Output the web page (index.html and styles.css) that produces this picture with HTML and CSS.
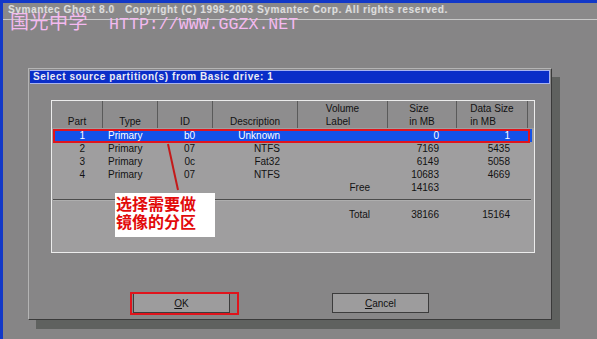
FILE: index.html
```html
<!DOCTYPE html>
<html lang="en">
<head>
    <meta charset="UTF-8">
    <title>Symantec Ghost 8.0</title>
    <link rel="stylesheet" href="styles.css">
</head>
<body>
    <div class="screen">
        <!-- Top copyright bar -->
        <div class="topbar">Symantec Ghost 8.0   Copyright (C) 1998-2003 Symantec Corp. All rights reserved.</div>

        <!-- Site watermark over the screenshot -->
        <div class="watermark">国光中学<span class="url">HTTP://WWW.GGZX.NET</span></div>

        <div class="desk">
            <div class="dialog">
                <div class="title">Select source partition(s) from Basic drive: 1</div>

                <div class="table">
                    <div class="thead">
                        <div class="th"><span>Part</span></div>
                        <div class="th"><span>Type</span></div>
                        <div class="th"><span>ID</span></div>
                        <div class="th"><span>Description</span></div>
                        <div class="th"><span>Volume<br>Label</span></div>
                        <div class="th"><span>Size<br>in MB</span></div>
                        <div class="th"><span>Data Size<br>in MB</span></div>
                        <div class="th last"></div>
                    </div>

                    <div class="rows">
                        <div class="row selected">
                            <span>1</span><span class="type">Primary</span><span>b0</span><span>Unknown</span><span></span><span>0</span><span>1</span>
                        </div>
                        <div class="row">
                            <span>2</span><span class="type">Primary</span><span>07</span><span>NTFS</span><span></span><span>7169</span><span>5435</span>
                        </div>
                        <div class="row">
                            <span>3</span><span class="type">Primary</span><span>0c</span><span>Fat32</span><span></span><span>6149</span><span>5058</span>
                        </div>
                        <div class="row">
                            <span>4</span><span class="type">Primary</span><span>07</span><span>NTFS</span><span></span><span>10683</span><span>4669</span>
                        </div>
                        <div class="row">
                            <span></span><span class="type"></span><span></span><span></span><span>Free</span><span>14163</span><span></span>
                        </div>
                        <div class="divider"></div>
                        <div class="row total">
                            <span></span><span class="type"></span><span></span><span></span><span>Total</span><span>38166</span><span>15164</span>
                        </div>
                    </div>

                    <!-- red annotation marks -->
                    <div class="mark-row"></div>
                    <svg class="pointer" width="482" height="151" viewBox="0 0 482 151">
                        <line x1="116" y1="43" x2="126" y2="89" stroke="#c41a1a" stroke-width="2"/>
                    </svg>
                    <div class="callout">选择需要做<br>镜像的分区</div>
                </div>

                <div class="buttons">
                    <button class="btn"><u>O</u>K</button>
                    <button class="btn"><u>C</u>ancel</button>
                    <div class="mark-ok"></div>
                </div>
            </div>
        </div>
    </div>
</body>
</html>
```

FILE: styles.css
```css
/* Screen */
body {
    margin: 0;
    width: 597px;
    height: 339px;
    overflow: hidden;
    background-color: #1238c8;
    font-family: "Liberation Sans", Arial, sans-serif;
}

.screen {
    position: relative;
    margin: 3px 0 0 3px;
    height: 336px;
    background-color: #868586;
}

.topbar {
    height: 16px;
    padding-left: 5px;
    border-bottom: 1px solid #c8c8c8;
    background-color: #8a898a;
    color: #dedede;
    font-size: 10px;
    font-weight: bold;
    line-height: 14px;
    letter-spacing: 0.62px;
    white-space: pre;
    text-shadow: 1px 0 0 #9a9a9a;
}

/* pink site watermark */
.watermark {
    position: absolute;
    top: 6px;
    left: 7px;
    color: #f4b9f0;
    font-family: "Noto Sans CJK SC", sans-serif;
    font-size: 19px;
    line-height: 24px;
    letter-spacing: 0.5px;
}

.watermark .url {
    margin-left: 21px;
    font-family: "Liberation Mono", monospace;
    font-size: 16.6px;
    letter-spacing: 0;
}

/* Dialog */
.desk {
    padding: 48px 0 0 25px;
}

.dialog {
    width: 524px;
    height: 252px;
    box-sizing: border-box;
    padding: 1px;
    border: 1px solid #3a3a3a;
    border-top-color: #b4b4b4;
    border-left-color: #b4b4b4;
    background-color: #878687;
    box-shadow: 8px 9px 0 #5f615f;
}

.title {
    height: 14px;
    box-sizing: border-box;
    padding-left: 3px;
    border: 1px solid #a8b4f0;
    border-left: none;
    background-color: #0a2ec8;
    color: #ecebf4;
    font-size: 10px;
    font-weight: bold;
    line-height: 12px;
    letter-spacing: 0.6px;
}

/* Partition table */
.table {
    position: relative;
    width: 484px;
    height: 153px;
    box-sizing: border-box;
    margin: 16px 0 0 21px;
    border: 1px solid #ececec;
    background-color: #9f9e9f;
    font-size: 10px;
    color: #121212;
}

.thead {
    display: grid;
    grid-template-columns: 51px 55px 55px 85px 90px 69px 71px 6px;
    height: 27px;
    background-color: #8e8d8e;
}

.th {
    display: flex;
    justify-content: center;
    align-items: flex-end;
    border-right: 1px solid #5a5a5a;
    line-height: 13px;
}

.th span {
    display: inline-block;
    text-align: left;
}

.th.last {
    border-right: none;
}

.rows {
    margin-top: 1px;
}

.row {
    display: grid;
    grid-template-columns: 49px 55px 55px 85px 90px 69px 71px;
    height: 13px;
    margin: 0 2px;
    line-height: 13px;
}

.row span {
    padding-right: 18px;
    text-align: right;
}

.row .type {
    padding: 0 0 0 5px;
    text-align: left;
}

.row.selected {
    background-color: #1451e8;
    color: #ffffff;
}

.divider {
    height: 0;
    margin: 5px 3px 7px 1px;
    border-top: 1px solid #4c4c4c;
    border-bottom: 1px solid #aeaeae;
}

.mark-row {
    position: absolute;
    top: 28px;
    left: 1px;
    width: 477px;
    height: 14px;
    box-sizing: border-box;
    border: 2px solid #e0141c;
}

.pointer {
    position: absolute;
    top: 0;
    left: 0;
}

.callout {
    position: absolute;
    top: 92px;
    left: 63px;
    width: 100px;
    height: 44px;
    padding: 1px 0 0 1px;
    box-sizing: border-box;
    background-color: #ffffff;
    color: #e20a0a;
    font-family: "Noto Sans CJK SC", sans-serif;
    font-size: 16px;
    font-weight: bold;
    line-height: 18px;
}

/* Buttons */
.buttons {
    position: relative;
    display: flex;
    gap: 102px;
    margin-top: 40px;
    padding-left: 103px;
}

.btn {
    width: 97px;
    height: 20px;
    padding: 0;
    border: 1px solid #3c3c3c;
    background-color: #9d9c9d;
    color: #111111;
    font-family: "Liberation Sans", Arial, sans-serif;
    font-size: 10px;
}

.mark-ok {
    position: absolute;
    top: -1px;
    left: 100px;
    width: 109px;
    height: 23px;
    box-sizing: border-box;
    border: 2px solid #e0141c;
}
```
